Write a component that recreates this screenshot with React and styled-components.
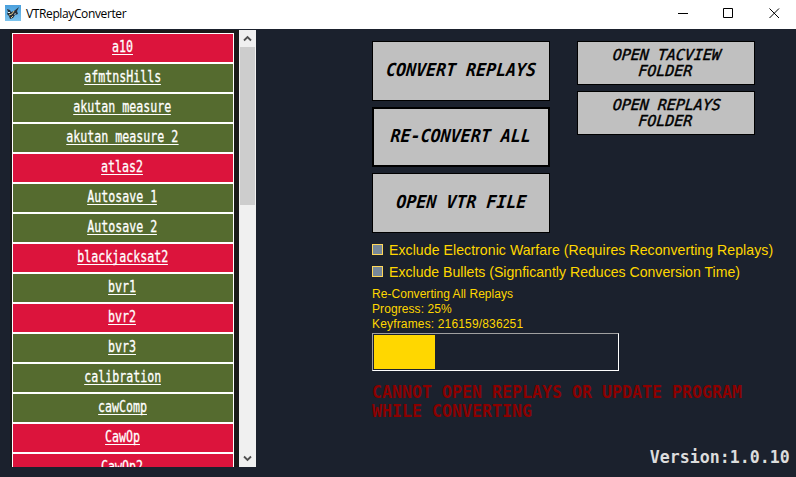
import React from "react";
import styled, { createGlobalStyle, css } from "styled-components";

const GlobalStyle = createGlobalStyle`
  * { box-sizing: border-box; }
  body { margin: 0; background: #1b212d; overflow: hidden; }
`;

const Window = styled.div`
  width: 796px;
  height: 477px;
  display: flex;
  flex-direction: column;
  background: #1b212d;
  overflow: hidden;
`;

const TitleBar = styled.header`
  flex: none;
  height: 29px;
  display: flex;
  align-items: flex-start;
  background: #fff;
  padding-left: 5px;
`;

const AppIcon = styled.svg`
  margin-top: 5px;
`;

const Title = styled.h1`
  flex: 1;
  margin: 0 0 0 5px;
  font: 400 12px/28px "Open Sans", "Noto Sans", sans-serif;
  letter-spacing: -0.38px;
  color: #000;
`;

const Caption = styled.button`
  width: 46px;
  height: 29px;
  padding: 0;
  border: 0;
  background: none;
`;

const Body = styled.main`
  flex: 1;
  min-height: 0;
  display: flex;
`;

const ListPanel = styled.section`
  display: flex;
  width: 246px;
  height: 437px;
  margin: 1px 0 0 10px;
  background: #1a1a1a;
  overflow: hidden;
`;

const ReplayList = styled.div`
  width: 222px;
  margin: 3px 5px 0 2px;
`;

const Row = styled.div`
  height: 30px;
  display: flex;
  justify-content: center;
  border: 1px solid #fff;
  background: ${(p) => (p.$failed ? "#dc143c" : "#556b2f")};
  padding: 5px 1px 0 0;
`;

const techFont = css`
  font-family: "DejaVu Sans Mono", monospace;
  white-space: pre;
`;

const ReplayName = styled.a`
  ${techFont}
  font-size: 15px;
  line-height: 17px;
  height: 16px;
  color: #fff;
  border-bottom: 1px solid #fff;
  -webkit-text-stroke: 0.3px #fff;
  transform: scaleX(0.775);
`;

const ScrollBar = styled.div`
  width: 17px;
  display: flex;
  flex-direction: column;
  background: #f0f0f0;
`;

const Thumb = styled.div`
  height: 158px;
  margin: 0 1px;
  background: #cdcdcd;
`;

const Spacer = styled.div`
  flex: 1;
`;

const Controls = styled.section`
  flex: 1;
  min-width: 0;
  margin-left: 116px;
  padding-top: 12px;
  display: flex;
  flex-direction: column;
`;

const ButtonColumns = styled.div`
  display: flex;
  gap: 27px;
`;

const ButtonColumn = styled.div`
  display: flex;
  flex-direction: column;
  gap: 6px;
`;

const ActionButton = styled.button`
  width: 178px;
  height: ${(p) => (p.$small ? 44 : 60)}px;
  padding: 0 0 ${(p) => (p.$small ? 1 : 2)}px;
  display: flex;
  align-items: center;
  justify-content: center;
  border: ${(p) => (p.$focused ? 2 : 1)}px solid #000;
  background: #c0c0c0;
  color: #000;
`;

const ButtonText = styled.span`
  ${techFont}
  font-size: ${(p) => (p.$small ? 15 : 18)}px;
  line-height: 16px;
  font-style: italic;
  font-weight: ${(p) => (p.$small ? 400 : 700)};
  text-align: center;
  flex: none;
  -webkit-text-stroke: ${(p) => (p.$small ? 0.4 : 0)}px #000;
  transform: scaleX(${(p) => (p.$small ? 0.997 : 0.923)}) skewX(-5deg);
`;

const Option = styled.label`
  height: 22px;
  display: flex;
  align-items: center;
  gap: 6px;
  color: #ffd700;
  font: 14.1px/22px "Liberation Sans", Arial, sans-serif;
  letter-spacing: ${(p) => p.$tracking || 0}px;
  white-space: nowrap;
`;

const Options = styled.div`
  margin-top: 6px;
`;

const CheckBox = styled.span`
  width: 11px;
  height: 11px;
  margin-top: -2px;
  border: 1px solid #ffd75a;
  background: #778899;
`;

const Status = styled.div`
  margin-top: 4px;
  color: #ffd700;
  font: 12px/15px "Liberation Sans", Arial, sans-serif;
  letter-spacing: ${(p) => p.$tracking || 0}px;
  white-space: pre;

  & + & {
    margin-top: 0;
  }
`;

const ProgressTrack = styled.div`
  width: 247px;
  height: 38px;
  margin-top: 1px;
  padding: 1px;
  border: 1px solid #fff;
  border-top-color: #a0a0a0;
  border-left-color: #a0a0a0;
`;

const ProgressFill = styled.div`
  width: 61px;
  height: 34px;
  background: #ffd700;
`;

const Warning = styled.p`
  ${techFont}
  margin: 11px 0 0;
  font-size: 18px;
  line-height: 19px;
  font-weight: 700;
  color: #8b0000;
  transform: scaleX(0.923);
  transform-origin: 0 0;
`;

const Version = styled.footer`
  ${techFont}
  align-self: flex-end;
  margin: 27px 6px 0 0;
  font-size: 18px;
  line-height: 20px;
  font-weight: 700;
  color: #dcdcdc;
  transform: scaleX(0.923);
  transform-origin: 100% 0;
`;

const replays = [
  ["a10", true],
  ["afmtnsHills", false],
  ["akutan measure", false],
  ["akutan measure 2", false],
  ["atlas2", true],
  ["Autosave 1", false],
  ["Autosave 2", false],
  ["blackjacksat2", true],
  ["bvr1", false],
  ["bvr2", true],
  ["bvr3", false],
  ["calibration", false],
  ["cawComp", false],
  ["CawOp", true],
  ["CawOp2", true],
];

function Arrow({ down }) {
  return (
    <svg width="17" height="17" viewBox="0 0 17 17" fill="none" stroke="#505050" strokeWidth="1.8">
      <path d={down ? "M5 6.5 8.5 10 12 6.5" : "M5 10.5 8.5 7 12 10.5"} />
    </svg>
  );
}

function JetIcon() {
  return (
    <AppIcon width="16" height="16" viewBox="0 0 16 16">
      <defs>
        <linearGradient id="sky" x2="0" y2="1">
          <stop stopColor="#4a9fdc" />
          <stop offset="1" stopColor="#7cc4ee" />
        </linearGradient>
      </defs>
      <path fill="url(#sky)" d="M0 0h16v16H0z" />
      <path fill="#26303a" d="m2 4 3 1 1 2 3-1 5-4-2 4 1 3-3 1-2 3-3 1-1-3-2-2 1-2z" />
      <path stroke="#d8c58c" d="m4 10 3-1 2-3M6 13l2-2" fill="none" />
      <path fill="#eaf5fb" d="M3 7h2v1H3zM9 9l2-1-1 2z" />
    </AppIcon>
  );
}

const captionIcons = {
  Minimize: "M20 13.5h10",
  Maximize: "M19.5 8.5h9v9h-9z",
  Close: "m19.5 8.5 9.5 9.5m0-9.5-9.5 9.5",
};

export default function App() {
  return (
    <Window>
      <GlobalStyle />
      <TitleBar>
        <JetIcon />
        <Title>VTReplayConverter</Title>
        {Object.entries(captionIcons).map(([name, d]) => (
          <Caption key={name} aria-label={name}>
            <svg width="46" height="29" viewBox="0 0 46 29" fill="none" stroke="#000">
              <path d={d} />
            </svg>
          </Caption>
        ))}
      </TitleBar>
      <Body>
        <ListPanel>
          <ReplayList>
            {replays.map(([name, failed]) => (
              <Row key={name} $failed={failed}>
                <ReplayName>{name}</ReplayName>
              </Row>
            ))}
          </ReplayList>
          <ScrollBar>
            <Arrow />
            <Thumb />
            <Spacer />
            <Arrow down />
          </ScrollBar>
        </ListPanel>
        <Controls>
          <ButtonColumns>
            <ButtonColumn>
              <ActionButton><ButtonText>CONVERT REPLAYS</ButtonText></ActionButton>
              <ActionButton $focused><ButtonText>RE-CONVERT ALL</ButtonText></ActionButton>
              <ActionButton><ButtonText>OPEN VTR FILE</ButtonText></ActionButton>
            </ButtonColumn>
            <ButtonColumn>
              <ActionButton $small><ButtonText $small>{"OPEN TACVIEW\nFOLDER"}</ButtonText></ActionButton>
              <ActionButton $small><ButtonText $small>{"OPEN REPLAYS\nFOLDER"}</ButtonText></ActionButton>
            </ButtonColumn>
          </ButtonColumns>
          <Options>
            <Option $tracking={0.055}><CheckBox />Exclude Electronic Warfare (Requires Reconverting Replays)</Option>
            <Option><CheckBox />Exclude Bullets (Signficantly Reduces Conversion Time)</Option>
          </Options>
          <Status $tracking={0.04}>Re-Converting All Replays</Status>
          <Status $tracking={0.08}>Progress: 25%</Status>
          <Status $tracking={0.16}>Keyframes: 216159/836251</Status>
          <ProgressTrack><ProgressFill /></ProgressTrack>
          <Warning>{"CANNOT OPEN REPLAYS OR UPDATE PROGRAM\nWHILE CONVERTING"}</Warning>
          <Version>Version:1.0.10</Version>
        </Controls>
      </Body>
    </Window>
  );
}
